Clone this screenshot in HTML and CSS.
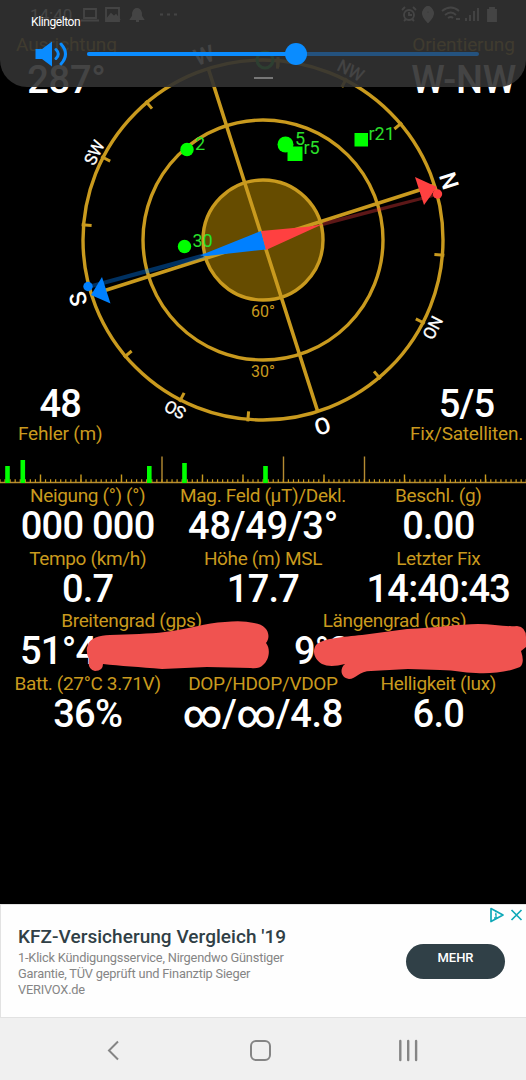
FILE: index.html
```
<!DOCTYPE html>
<html lang="de">
<head>
<meta charset="utf-8">
<title>GPS Status</title>
<link rel="stylesheet" href="styles.css">
</head>
<body>
<div class="phone">
  <main class="app">
    <section class="hero">
      <svg class="dial" viewBox="0 0 526 454">
        <g fill="none" stroke="#c99a1e" stroke-width="3.4">
          <circle cx="263" cy="240" r="180"/>
          <circle cx="263" cy="240" r="120"/>
          <circle cx="263" cy="240" r="60" fill="#664c00"/>
        </g>
        <g class="dial-label">
          <text x="263" y="317">60°</text>
          <text x="263" y="377">30°</text>
        </g>
        <g transform="translate(263 240) rotate(72.300)">
          <path d="M0-180V180M-180 0H180" stroke="#c99a1e" stroke-width="3.6"/>
          <g stroke="#c99a1e" stroke-width="3">
            <path d="M0-172V-182" transform="rotate(22.500)"/>
            <path d="M0-172V-182" transform="rotate(45)"/>
            <path d="M0-172V-182" transform="rotate(67.500)"/>
            <path d="M0-172V-182" transform="rotate(112.500)"/>
            <path d="M0-172V-182" transform="rotate(135)"/>
            <path d="M0-172V-182" transform="rotate(157.500)"/>
            <path d="M0-172V-182" transform="rotate(202.500)"/>
            <path d="M0-172V-182" transform="rotate(225)"/>
            <path d="M0-172V-182" transform="rotate(247.500)"/>
            <path d="M0-172V-182" transform="rotate(292.500)"/>
            <path d="M0-172V-182" transform="rotate(315)"/>
            <path d="M0-172V-182" transform="rotate(337.500)"/>
          </g>
          <g class="cardinal">
            <text y="-187">N</text>
            <text y="-187" transform="rotate(90)">O</text>
            <text y="-186" transform="rotate(180)">S</text>
            <text y="-186" transform="rotate(270)">W</text>
          </g>
          <g class="intercardinal">
            <text y="-185" transform="rotate(45)">NO</text>
            <text y="-185" transform="rotate(135)">SO</text>
            <text y="-184" transform="rotate(225)">SW</text>
            <text y="-185" transform="rotate(315)">NW</text>
          </g>
        </g>
        <path d="M323 222L437 193V196L323 226Z" fill="#ff4040" opacity=".36"/>
        <path d="M205 253L88 285V289L205 258Z" fill="#0080ff" opacity=".38"/>
        <path d="M261 231L200 255.500L207 256L266 249.500Z" fill="#0080ff"/>
        <path d="M261 231L310 226.500L323 224L266 250Z" fill="#ff4040"/>
        <path d="M415 177L437 187L424 205Z" fill="#ff4040"/>
        <circle cx="437.500" cy="194" r="4.700" fill="#ff4040"/>
        <path d="M102 277L91 295L110.500 303.500Z" fill="#0080ff"/>
        <circle cx="88" cy="286.500" r="4.700" fill="#0080ff"/>
        <g fill="#00ff00">
          <circle cx="187" cy="149.500" r="6.700"/>
          <circle cx="184.500" cy="246.500" r="6.700"/>
          <circle cx="285.500" cy="144.500" r="8"/>
          <path d="M287.500 146.500h15v14.500h-15zM354.500 133h13.500v13.500h-13.500z"/>
        </g>
        <g class="sat-label">
          <text x="195" y="149.500">2</text>
          <text x="192.500" y="247">30</text>
          <text x="295" y="144.500">5</text>
          <text x="303.500" y="153.500">r5</text>
          <text x="368.500" y="139.500">r21</text>
        </g>
        <circle cx="265" cy="60" r="8" fill="none" stroke="#00c030" stroke-width="3"/>
        <path d="M278 57v10" stroke="#c99a1e" stroke-width="3"/>
      </svg>
      <div class="corners">
        <div class="statusbar">
          <span class="clock">14:40</span>
          <svg class="notices" viewBox="0 0 100 18" fill="none" stroke="#fff" stroke-width="1.800">
            <path d="M4 3h12v9H4zM1 14.500h18"/>
            <path d="M26 2h13v13H26z"/><path d="M27 13l4-5 3 3 2-2 3 4z" fill="#fff"/>
            <path d="M51 13h12l-2-3V7q-1-4-4-4t-4 4v3zM56 15h3" fill="#fff"/>
            <path d="M80 8.500h3M87 8.500h3M94 8.500h3"/>
          </svg>
          <svg class="system" viewBox="0 0 98 18" fill="none" stroke="#fff" stroke-width="1.800">
            <circle cx="9" cy="9" r="5"/><path d="M9 6v3h3M2 4l3-3M16 4l-3-3M4 15l2-2M14 15l-2-2"/>
            <path d="M28 16q-6-6-5-10 2-5 5-5t5 5q1 4-5 10z" fill="#fff"/><circle cx="28" cy="6" r="1.500" fill="#333"/>
            <path d="M42 5q9-7 17 0M45 9q6-5 11 0M48 12q3-2 5 0M56 13h4M66 15v-3M70 15V9M74 15V5M78 15V2"/>
            <path d="M88 4h2V2h4v2h2v11h-8z" fill="#fff"/>
          </svg>
        </div>
        <div class="readouts top">
          <div class="readout"><span class="label">Ausrichtung</span><b class="value">287°</b></div>
          <div class="readout"><span class="label">Orientierung</span><b class="value">W-NW</b></div>
        </div>
        <div class="readouts bottom">
          <div class="readout"><b class="value">48</b><span class="label">Fehler (m)</span></div>
          <div class="readout"><b class="value">5/5</b><span class="label">Fix/Satelliten.</span></div>
        </div>
      </div>
    </section>

    <svg class="signal" viewBox="0 454 526 30">
      <path d="M0 482.500H526M162 482V456.500M283.500 482V456.500M364.500 482V456.500" stroke="#b58b32" stroke-width="1.400" fill="none"/>
      <path d="M-.600 481H526" stroke="#c99a1e" stroke-width="3.500" stroke-dasharray="1.200 3.860"/>
      <path d="M40.500 482V474.500M81 482V474.500M121.500 482V474.500M202.500 482V474.500M243 482V474.500M324 482V474.500M404.500 482V474.500M445 482V474.500M485.500 482V474.500" stroke="#c99a1e" stroke-width="1.400"/>
      <path d="M5.200 466h4.600v17h-4.600zM20.500 460h4.600v23h-4.600zM147 466h4.600v17h-4.600zM182.200 463h4.600v20h-4.600zM263.200 466h4.600v17h-4.600z" fill="#00ff00"/>
    </svg>

    <section class="data">
      <div class="row">
        <div class="cell"><span class="label">Neigung (°) (°)</span><b class="value">000 000</b></div>
        <div class="cell"><span class="label">Mag. Feld (µT)/Dekl.</span><b class="value wide">48/49/3°</b></div>
        <div class="cell"><span class="label">Beschl. (g)</span><b class="value">0.00</b></div>
      </div>
      <div class="row">
        <div class="cell"><span class="label">Tempo (km/h)</span><b class="value">0.7</b></div>
        <div class="cell"><span class="label">Höhe (m) MSL</span><b class="value">17.7</b></div>
        <div class="cell"><span class="label">Letzter Fix</span><b class="value">14:40:43</b></div>
      </div>
      <div class="row position">
        <div class="cell"><span class="label">Breitengrad (gps)</span><b class="value">51°4</b></div>
        <div class="cell"><span class="label">Längengrad (gps)</span><b class="value">9°2</b></div>
        <svg class="redaction" viewBox="0 609 526 70" fill="#f05350">
          <path d="M88 645C90 638 99 635.500 110 635C130 634 150 634 165 632C190 629 205 623 225 622Q242 620 254 623C269 625 271 637 266 643C271 649 269 660 263 665Q259 669 251 668L207 667L162 669C140 667 120 666 103 664Q103 671 95 671Q87 669 89 659Q85 651 88 645Z"/>
          <path d="M316 645C323 638 343 637 362 635L407 629C435 628 460 624 478 624C493 624 505 627 517 626Q526 627 526 637V647L521 651Q525 663 520 667C508 672 490 674 476 673C462 673 457 670 440 670L408 669L371 671C359 671 356 679 349 679C341 678 339 669 345 664Q330 668 322 664C314 659 312 651 316 645Z"/>
        </svg>
      </div>
      <div class="row">
        <div class="cell"><span class="label">Batt. (27°C 3.71V)</span><b class="value">36%</b></div>
        <div class="cell"><span class="label">DOP/HDOP/VDOP</span><b class="value wide">∞/∞/4.8</b></div>
        <div class="cell"><span class="label">Helligkeit (lux)</span><b class="value">6.0</b></div>
      </div>
    </section>
  </main>

  <aside class="ad">
    <div class="ad-copy">
      <h2 class="ad-title">KFZ-Versicherung Vergleich '19</h2>
      <p class="ad-text">1-Klick Kündigungsservice, Nirgendwo Günstiger<br>Garantie, TÜV geprüft und Finanztip Sieger<br>VERIVOX.de</p>
    </div>
    <button class="ad-button">MEHR</button>
    <svg class="ad-choices" viewBox="0 0 34 16" fill="none" stroke="#10a9b8" stroke-width="1.700">
      <path d="M2 1.500L14 8L2 14.500Z" stroke-linejoin="round"/><path d="M6 7h1v4M5 11h3.500M6 4.500h1.300" stroke-width="1.300"/>
      <path d="M22.500 3L32.500 13M32.500 3L22.500 13"/>
    </svg>
  </aside>

  <nav class="navbar">
    <svg viewBox="0 0 526 62" fill="none" stroke="#858585" stroke-width="2">
      <path d="M118 23.500L109 32.500L118 41.500"/>
      <rect x="251" y="23" width="19" height="19" rx="5"/>
      <path d="M400.300 23V42M408.200 23V42M416.100 23V42" stroke-width="2.400" stroke-linecap="round"/>
    </svg>
  </nav>

  <div class="volume">
    <span class="volume-title">Klingelton</span>
    <div class="volume-row">
      <svg class="speaker" viewBox="0 0 33 26" fill="none" stroke="#0a8cff" stroke-width="3" stroke-linecap="round">
        <path d="M.500 8H7L17 .500V25.500L7 18H.500Z" fill="#0a8cff" stroke="none"/>
        <path d="M21 8.500Q25.500 13 21 17.500M26 3Q35 13 26 23"/>
      </svg>
      <div class="slider"><div class="slider-fill"><i class="thumb"></i></div></div>
    </div>
    <i class="handle"></i>
  </div>
</div>
</body>
</html>
```
FILE: styles.css
```
* { box-sizing: border-box; }
body { margin: 0; background: #000; font-family: Roboto, "Liberation Sans", sans-serif; }
svg { display: block; }
.phone { position: relative; width: 526px; height: 1080px; display: flex; flex-direction: column; overflow: hidden; background: #000; }
.app { flex: 1; min-height: 0; }

/* Compass with corner readouts stacked in the same grid area */
.hero { display: grid; height: 454px; }
.dial, .corners { grid-area: 1 / 1; }
.dial { width: 526px; height: 454px; }
.corners { display: flex; flex-direction: column; height: 454px; }
.dial text { text-anchor: middle; }
.dial-label { fill: #c99a1e; font-size: 16px; }
.cardinal { fill: #fff; font-size: 23px; font-weight: 500; }
.intercardinal { fill: #fff; font-size: 17px; letter-spacing: -0.4px; stroke: #fff; stroke-width: 0.3px; }
.dial .sat-label text { text-anchor: start; }
.sat-label { fill: #2be02b; font-size: 18px; }

.statusbar { display: flex; align-items: center; height: 30px; padding: 0 28px 0 30px; }
.clock { width: 50px; color: #fff; font-size: 17px; }
.notices { width: 100px; height: 18px; }
.system { width: 98px; height: 18px; margin-left: auto; }

.label { display: block; height: 22px; line-height: 22px; font-size: 19px; letter-spacing: -0.34px; color: #c99a1e; white-space: nowrap; }
.value { display: block; height: 39px; line-height: 39px; font-size: 38px; font-weight: 500; letter-spacing: -0.75px; color: #fff; white-space: nowrap; }
.value.wide { letter-spacing: -0.3px; }

.readouts { display: flex; justify-content: space-between; }
.readout { display: flex; flex-direction: column; align-items: center; }
.readouts.top { padding: 4px 10px 0 16px; }
.readouts.top .label { letter-spacing: -0.1px; }
.readouts.top .value { margin-top: 5px; letter-spacing: -0.2px; }
.readouts.bottom { margin-top: auto; padding: 0 3px 9px 18px; }
.readouts.bottom .value { margin-bottom: -1px; }
.readouts.bottom .label { letter-spacing: -0.2px; }

.signal { width: 526px; height: 30px; }

.row { position: relative; display: grid; grid-template-columns: repeat(3, 1fr); height: 62.5px; padding-top: 1px; }
.cell { text-align: center; }
.row.position { grid-template-columns: 1fr 1fr; }
.position .value { padding-left: 20px; text-align: left; }
.position .cell:nth-child(2) .value { padding-left: 31px; }
.redaction { position: absolute; left: 0; top: 0; width: 526px; height: 70px; z-index: 1; }

.ad { position: relative; display: flex; align-items: center; justify-content: space-between; height: 114px; padding: 0 21px 0 17px; background: #fefefe; border: solid #e2e2e2; border-width: 1px 0 1px 1px; }
.ad-title { margin: 0; font-size: 19px; line-height: 26px; letter-spacing: 0.04px; font-weight: 500; color: #303f46; }
.ad-text { margin: 0; font-size: 12.8px; line-height: 16px; letter-spacing: -0.2px; color: #858585; }
.ad-button { width: 99px; height: 35px; padding: 0 0 8px; border: 0; border-radius: 18px; background: #304047; color: #fff; font: 500 13px Roboto, sans-serif; }
.ad-choices { position: absolute; right: 3px; top: 2px; width: 34px; height: 16px; }

.navbar { height: 62px; background: #f0f0f0; }
.navbar svg { width: 526px; height: 62px; }

.volume { position: absolute; left: 0; top: 0; width: 526px; height: 87px; padding: 14px 47px 0 31px; border-radius: 0 0 27px 27px; background: rgba(50, 50, 50, 0.91); }
.volume-title { display: block; height: 17px; line-height: 17px; font-size: 12px; letter-spacing: -0.4px; color: #fff; }
.volume-row { display: flex; align-items: center; height: 46px; padding-left: 4px; }
.speaker { width: 33px; height: 26px; margin-right: 19px; }
.slider { flex: 1; height: 4px; border-radius: 2px; background: #24527e; }
.slider-fill { display: flex; justify-content: flex-end; align-items: center; width: 220px; height: 4px; border-radius: 2px; background: #0a8cff; }
.thumb { width: 22px; height: 22px; border-radius: 50%; background: #0a8cff; }
.handle { display: block; width: 19px; height: 2px; margin: 0 auto 0 223px; background: #777; }
```
